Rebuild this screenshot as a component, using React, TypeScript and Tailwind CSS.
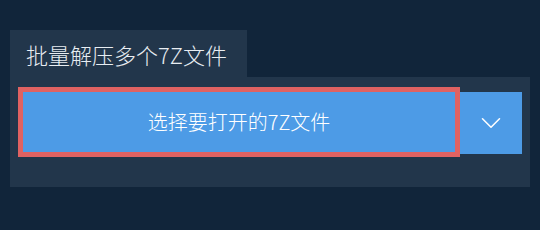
import { ChevronDown } from "lucide-react";

export default function App() {
    return (
        <div
            className="w-[540px] h-[230px] bg-[#11253a] pt-[30px] px-[10px]"
            style={{ fontFamily: '"Noto Sans CJK SC", "Noto Sans", sans-serif' }}
        >
            {/* Tab header */}
            <div className="w-[237px] h-[47px] bg-[#22364b] flex items-center pl-[16px]">
                <span className="text-[22px] leading-none font-light text-[#e8edf2]">批量解压多个7Z文件</span>
            </div>

            {/* Panel */}
            <div className="w-[520px] h-[110px] bg-[#22364b] pt-[10px] px-[8px]">
                <div className="flex items-start">
                    <button className="w-[442px] h-[70px] border-[5px] border-[#e06262] bg-[#4d9be6] flex items-center justify-center">
                        <span className="text-[20px] leading-none font-light text-white">选择要打开的7Z文件</span>
                    </button>
                    <button className="mt-[5px] w-[62px] h-[62px] bg-[#4d9be6] flex items-center justify-center">
                        <ChevronDown size={34} strokeWidth={1.1} className="text-white" />
                    </button>
                </div>
            </div>
        </div>
    );
}
